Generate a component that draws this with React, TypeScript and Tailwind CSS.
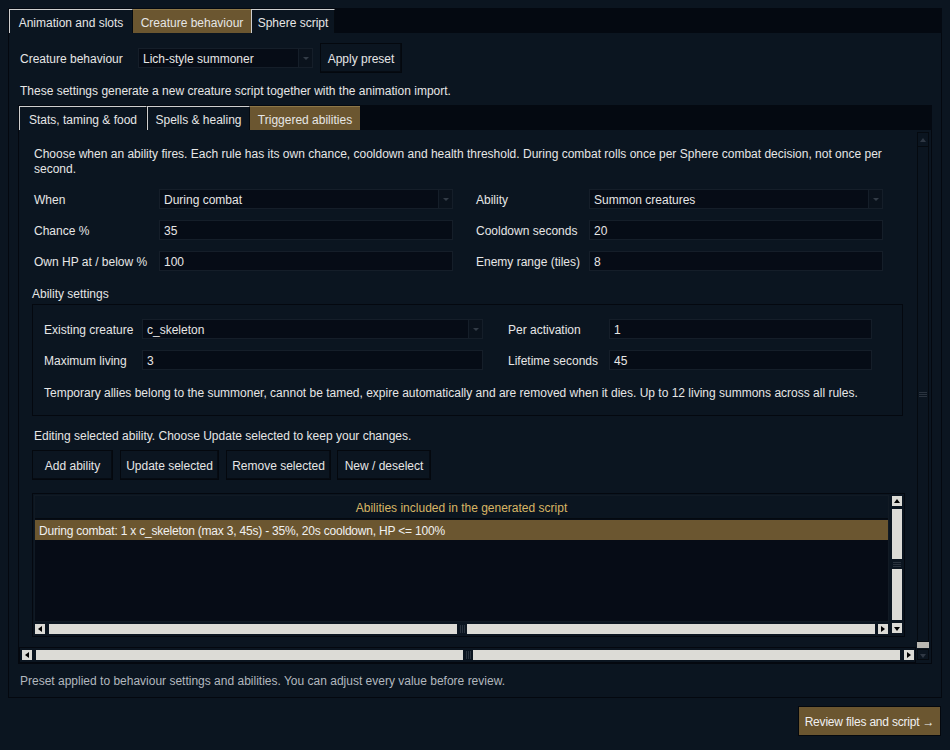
import React from 'react';

type Dir = 'up' | 'down' | 'left' | 'right';

const tri: Record<Dir, string> = {
  up: '1,6 4,2 7,6',
  down: '1,3 4,7 7,3',
  left: '6,1 2,4 6,7',
  right: '2,1 6,4 2,7',
};

function LightArrow({ dir }: { dir: Dir }) {
  return (
    <div className="w-[10px] h-[10px] shrink-0 bg-[#dcdbd6] flex items-center justify-center">
      <svg width="8" height="8" viewBox="0 0 8 8">
        <polygon points={tri[dir]} fill="#000" />
      </svg>
    </div>
  );
}

function DarkArrow({ dir, className }: { dir: Dir; className: string }) {
  return (
    <div className={`${className} shrink-0 bg-[#0b1520] border border-[#050a10] flex items-center justify-center`}>
      <svg width="8" height="8" viewBox="0 0 8 8">
        <polygon points={tri[dir]} fill="#2f3844" />
      </svg>
    </div>
  );
}

function GripV() {
  // vertical lines, for a horizontal scrollbar
  return (
    <div className="w-[10px] h-full shrink-0 bg-[#0b1520] flex justify-center items-center gap-[1px]">
      <div className="w-px h-[8px] bg-[#2a333e]" />
      <div className="w-px h-[8px] bg-[#2a333e]" />
      <div className="w-px h-[8px] bg-[#2a333e]" />
    </div>
  );
}

function GripH() {
  return (
    <div className="h-[10px] w-full shrink-0 bg-[#0b1520] flex flex-col justify-center items-center gap-[1px]">
      <div className="h-px w-[8px] bg-[#2a333e]" />
      <div className="h-px w-[8px] bg-[#2a333e]" />
      <div className="h-px w-[8px] bg-[#2a333e]" />
    </div>
  );
}

function Entry({ value, w }: { value: string; w: string }) {
  return (
    <div className={`${w} h-[20px] shrink-0 bg-[#060c16] border border-[#151e29] flex items-center pl-[4px] pt-[2px]`}>
      {value}
    </div>
  );
}

function Combo({ value, w }: { value: string; w: string }) {
  return (
    <div className={`${w} h-[20px] shrink-0 bg-[#060c16] border border-[#151e29] flex items-center`}>
      <span className="flex-1 pl-[4px] pt-[2px]">{value}</span>
      <div className="w-[14px] h-full border-l border-[#151e29] bg-[#0a121c] flex items-center justify-center">
        <svg width="8" height="8" viewBox="0 0 8 8">
          <polygon points="1,3 4,6 7,3" fill="#333c47" />
        </svg>
      </div>
    </div>
  );
}

function Button({ label, w }: { label: string; w: string }) {
  return (
    <div className={`${w} h-[30px] shrink-0 bg-[#0b1520] border border-[#04080e] shadow-[inset_-1px_-1px_0_#060b12] flex items-center justify-center pt-[2px]`}>
      {label}
    </div>
  );
}

function Tab({ label, w, active }: { label: string; w: string; active?: boolean }) {
  return (
    <div
      className={
        active
          ? `${w} h-[24px] shrink-0 bg-[#6b5630] border-t border-[#8d7748] flex items-center justify-center pt-[2px]`
          : `${w} h-[24px] shrink-0 bg-[#0b1520] border-t border-l border-[#cfcfcf] border-r border-r-[#050a10] flex items-center justify-center pt-[2px]`
      }
    >
      {label}
    </div>
  );
}

export default function App() {
  return (
    <div className="w-[950px] h-[750px] overflow-hidden bg-[#0b1520] text-[#e6e6e6] text-[12px] leading-[14px] font-['Liberation_Sans',Arial,sans-serif] pt-[8px] pl-[8px]">
      {/* outer notebook */}
      <div className="w-[934px]">
        <div className="h-[25px] bg-[#040911] flex items-end pl-[1px]">
          <Tab label="Animation and slots" w="w-[124px]" />
          <Tab label="Creature behaviour" w="w-[118px]" active />
          <Tab label="Sphere script" w="w-[84px]" />
        </div>

        <div className="h-[665px] border-x border-b border-[#04080f] pl-[9px] pr-[9px] pt-[10px] flex flex-col">
          <div className="flex items-center h-[30px] pl-[2px]">
            <span className="w-[118px] shrink-0 pt-[2px]">Creature behaviour</span>
            <Combo value="Lich-style summoner" w="w-[175px]" />
            <div className="ml-[7px]">
              <Button label="Apply preset" w="w-[82px]" />
            </div>
          </div>
          <p className="mt-[11px] pl-[2px]">
            These settings generate a new creature script together with the animation import.
          </p>

          {/* inner notebook */}
          <div className="mt-[7px] w-[914px]">
            <div className="h-[25px] bg-[#040911] flex items-end pl-[1px]">
              <Tab label="Stats, taming & food" w="w-[128px]" />
              <Tab label="Spells & healing" w="w-[103px]" />
              <Tab label="Triggered abilities" w="w-[110px]" active />
            </div>

            <div className="h-[534px] border-x border-b border-[#04080f] flex">
              <div className="w-[897px] flex flex-col">
                {/* canvas */}
                <div className="h-[517px] overflow-hidden pl-[13px] pt-[17px] flex flex-col">
                  <p className="pl-[2px] w-[860px] leading-[15px]">
                    Choose when an ability fires. Each rule has its own chance, cooldown and health threshold. During combat rolls once per Sphere combat decision, not once per
                    <br />
                    second.
                  </p>

                  <div className="mt-[12px] pl-[2px] flex flex-col gap-[11px]">
                    <div className="flex items-center">
                      <span className="w-[125px] shrink-0 pt-[2px]">When</span>
                      <Combo value="During combat" w="w-[294px]" />
                      <span className="ml-[23px] w-[113px] shrink-0 pt-[2px]">Ability</span>
                      <Combo value="Summon creatures" w="w-[294px]" />
                    </div>
                    <div className="flex items-center">
                      <span className="w-[125px] shrink-0 pt-[2px]">Chance %</span>
                      <Entry value="35" w="w-[294px]" />
                      <span className="ml-[23px] w-[113px] shrink-0 pt-[2px]">Cooldown seconds</span>
                      <Entry value="20" w="w-[294px]" />
                    </div>
                    <div className="flex items-center">
                      <span className="w-[125px] shrink-0 pt-[2px]">Own HP at / below %</span>
                      <Entry value="100" w="w-[294px]" />
                      <span className="ml-[23px] w-[113px] shrink-0 pt-[2px]">Enemy range (tiles)</span>
                      <Entry value="8" w="w-[294px]" />
                    </div>
                  </div>

                  <p className="mt-[16px]">Ability settings</p>

                  <div className="mt-[3px] w-[871px] h-[112px] border border-[#04080f] pl-[11px] pt-[14px] flex flex-col">
                    <div className="flex flex-col gap-[11px]">
                      <div className="flex items-center">
                        <span className="w-[98px] shrink-0 pt-[2px]">Existing creature</span>
                        <Combo value="c_skeleton" w="w-[341px]" />
                        <span className="ml-[25px] w-[101px] shrink-0 pt-[2px]">Per activation</span>
                        <Entry value="1" w="w-[263px]" />
                      </div>
                      <div className="flex items-center">
                        <span className="w-[98px] shrink-0 pt-[2px]">Maximum living</span>
                        <Entry value="3" w="w-[341px]" />
                        <span className="ml-[25px] w-[101px] shrink-0 pt-[2px]">Lifetime seconds</span>
                        <Entry value="45" w="w-[263px]" />
                      </div>
                    </div>
                    <p className="mt-[16px]">
                      Temporary allies belong to the summoner, cannot be tamed, expire automatically and are removed when it dies. Up to 12 living summons across all rules.
                    </p>
                  </div>

                  <p className="mt-[13px] pl-[2px]">
                    Editing selected ability. Choose Update selected to keep your changes.
                  </p>

                  <div className="mt-[7px] flex">
                    <Button label="Add ability" w="w-[81px]" />
                    <div className="ml-[7px]"><Button label="Update selected" w="w-[99px]" /></div>
                    <div className="ml-[7px]"><Button label="Remove selected" w="w-[105px]" /></div>
                    <div className="ml-[6px]"><Button label="New / deselect" w="w-[94px]" /></div>
                  </div>

                  {/* listbox */}
                  <div className="mt-[13px] w-[873px] h-[144px] border border-[#04080f] p-[1px] flex gap-[2px]">
                    <div className="w-[856px] flex flex-col">
                      <div className="h-[127px] border border-[#111a24] bg-[#060c16] flex flex-col">
                        <div className="h-[23px] bg-[#0b1520] border-b border-[#050a10] flex items-center justify-center pt-[2px] text-[#d8b565]">
                          Abilities included in the generated script
                        </div>
                        <div className="mt-[1px] h-[20px] bg-[#6b5630] text-[#f0f0f0] flex items-center pl-[4px] pt-[2px] tracking-[-0.2px]">
                          During combat: 1 x c_skeleton (max 3, 45s) - 35%, 20s cooldown, HP &lt;= 100%
                        </div>
                      </div>
                      <div className="mt-[1px] h-[11px] flex items-center pl-[1px] pr-[1px]">
                        <LightArrow dir="left" />
                        <div className="ml-[4px] flex-1 h-[10px] bg-[#dcdbd6]" />
                        <div className="h-[10px]"><GripV /></div>
                        <div className="flex-1 h-[10px] bg-[#dcdbd6]" />
                        <div className="ml-[3px]"><LightArrow dir="right" /></div>
                      </div>
                    </div>
                    <div className="w-[12px] flex flex-col items-center pt-[1px]">
                      <LightArrow dir="up" />
                      <div className="mt-[3px] w-[10px] h-[50px] bg-[#dcdbd6]" />
                      <div className="w-[10px]"><GripH /></div>
                      <div className="w-[10px] h-[51px] bg-[#dcdbd6]" />
                      <div className="mt-[3px]"><LightArrow dir="down" /></div>
                    </div>
                  </div>
                </div>

                {/* canvas horizontal scrollbar */}
                <div className="h-[16px] border border-[#04080f] flex items-center pl-[2px] pr-[1px]">
                  <LightArrow dir="left" />
                  <div className="ml-[4px] flex-1 h-[10px] bg-[#dcdbd6]" />
                  <div className="h-[10px]"><GripV /></div>
                  <div className="flex-1 h-[10px] bg-[#dcdbd6]" />
                  <div className="ml-[4px]"><LightArrow dir="right" /></div>
                </div>
              </div>

              {/* canvas vertical scrollbar */}
              <div className="ml-[1px] mt-[2px] w-[12px] h-[528px] flex flex-col">
                <DarkArrow dir="up" className="w-[12px] h-[15px]" />
                <div className="flex-1 border-x border-b border-[#050a10] bg-[#0b1520] flex items-center">
                  <GripH />
                </div>
                <div className="h-[6px] bg-[#b9b7b1]" />
                <DarkArrow dir="down" className="mt-[1px] w-[12px] h-[11px]" />
              </div>
            </div>
          </div>

          <p className="mt-[10px] pl-[2px] text-[#b2b8bf]">
            Preset applied to behaviour settings and abilities. You can adjust every value before review.
          </p>
        </div>
      </div>

      <div className="w-[934px] mt-[8px] flex justify-end">
        <div className="mr-[1px] w-[143px] h-[30px] bg-[#6b5630] border border-[#04080e] text-[#f0f0f0] flex items-center justify-center pt-[2px] tracking-[-0.2px]">
          Review files and script →
        </div>
      </div>
    </div>
  );
}
